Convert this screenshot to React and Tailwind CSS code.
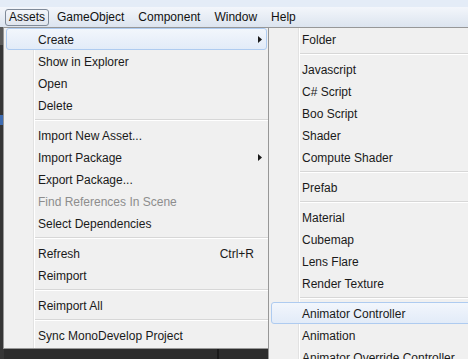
import React from "react";

const font = { fontFamily: '"Liberation Sans", Arial, sans-serif' };

function Item({ label, gray, arrow, shortcut, active, gutter = 33 }) {
  return (
    <div className="relative h-[22px] flex items-center">
      {active && (
        <div className="absolute left-[2px] right-[1px] top-0 bottom-0 rounded-[3px] border border-[#aecbf0] bg-gradient-to-b from-[#f2f6fc] to-[#e2ebf8]" />
      )}
      <span
        className={`relative pt-[2px] text-[12px] leading-none ${gray ? "text-[#8d8d8d]" : "text-[#1a1a1a]"}`}
        style={{ paddingLeft: gutter }}
      >
        {label}
      </span>
      {shortcut && (
        <span className="relative pt-[2px] ml-auto mr-[14px] text-[12px] leading-none text-[#1a1a1a]">{shortcut}</span>
      )}
      {arrow && (
        <svg className="absolute right-[6px] top-[8px]" width="4" height="7" viewBox="0 0 4 7">
          <path d="M0 0 L4 3.5 L0 7 Z" fill="#1a1a1a" />
        </svg>
      )}
    </div>
  );
}

function Sep({ gutter = 30 }) {
  return (
    <div className="h-[8px] flex flex-col justify-center" style={{ paddingLeft: gutter }}>
      <div className="h-px bg-[#d7d7d7]" />
      <div className="h-px bg-white" />
    </div>
  );
}

export default function App() {
  return (
    <div className="relative w-[468px] h-[359px] overflow-hidden bg-[#2c2c2c]" style={font}>
      <div className="h-[7px] bg-[#e4ecf7]" />
      <div className="h-[20px] flex items-center bg-gradient-to-b from-[#f3f6fb] to-[#dce4ef] text-[12px] text-[#111]">
        <div className="ml-[5px] h-[17px] w-[44px] flex items-center justify-center rounded-[3px] border border-[#7f8a99] bg-gradient-to-b from-[#f4f6fa] to-[#dfe5ee]">
          Assets
        </div>
        <span className="ml-[8px]">GameObject</span>
        <span className="ml-[14px]">Component</span>
        <span className="ml-[14px]">Window</span>
        <span className="ml-[14px]">Help</span>
      </div>
      {/* left dark strip */}
      <div className="absolute left-0 top-[27px] w-[4px] h-[332px] bg-[#363636]">
        <div className="h-[18px] bg-[#5a5a5a]" />
        <div className="mt-[70px] h-[10px] bg-[#3e6bb0]" />
      </div>
      {/* bottom line */}
      <div className="absolute left-[217px] top-[349px] w-[2px] h-[10px] bg-[#1a1a1a]" />
      {/* main menu */}
      <div className="absolute left-[3px] top-[27px] w-[266px] border border-[#979797] bg-[#f0f0f0] pb-[2px]">
        <div className="absolute left-[29px] top-0 bottom-0 w-px bg-[#e2e2e2]" />
        <div className="absolute left-[30px] top-0 bottom-0 w-px bg-white" />
        <Item label="Create" arrow active gutter={34} />
        <Item label="Show in Explorer" gutter={34} />
        <Item label="Open" gutter={34} />
        <Item label="Delete" gutter={34} />
        <Sep gutter={30} />
        <Item label="Import New Asset..." gutter={34} />
        <Item label="Import Package" arrow gutter={34} />
        <Item label="Export Package..." gutter={34} />
        <Item label="Find References In Scene" gray gutter={34} />
        <Item label="Select Dependencies" gutter={34} />
        <Sep gutter={30} />
        <Item label="Refresh" shortcut="Ctrl+R" gutter={34} />
        <Item label="Reimport" gutter={34} />
        <Sep gutter={30} />
        <Item label="Reimport All" gutter={34} />
        <Sep gutter={30} />
        <Item label="Sync MonoDevelop Project" gutter={34} />
      </div>
      {/* submenu */}
      <div className="absolute left-[268px] top-[27px] w-[220px] h-[340px] border border-[#979797] bg-[#f0f0f0]">
        <div className="absolute left-[29px] top-0 bottom-0 w-px bg-[#e2e2e2]" />
        <div className="absolute left-[30px] top-0 bottom-0 w-px bg-white" />
        <Item label="Folder" />
        <Sep />
        <Item label="Javascript" />
        <Item label="C# Script" />
        <Item label="Boo Script" />
        <Item label="Shader" />
        <Item label="Compute Shader" />
        <Sep />
        <Item label="Prefab" />
        <Sep />
        <Item label="Material" />
        <Item label="Cubemap" />
        <Item label="Lens Flare" />
        <Item label="Render Texture" />
        <Sep />
        <Item label="Animator Controller" active />
        <Item label="Animation" />
        <Item label="Animator Override Controller" />
      </div>
    </div>
  );
}
